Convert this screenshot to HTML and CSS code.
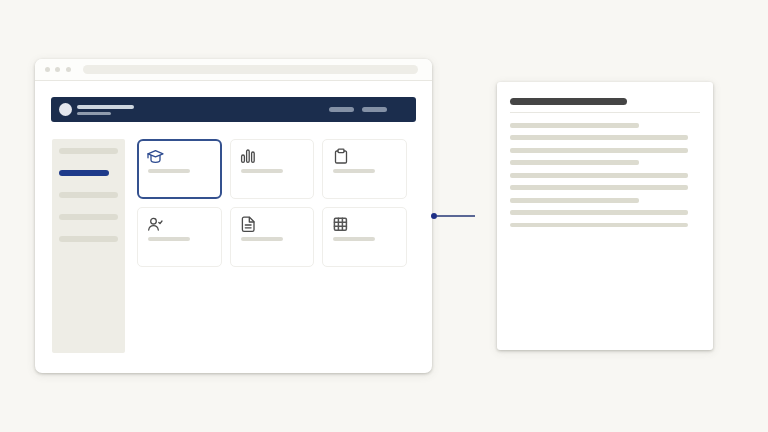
FILE: index.html
```html
<!DOCTYPE html>
<html lang="en">
<head>
<meta charset="utf-8">
<title>Portal and document</title>
<link rel="stylesheet" href="styles.css">
</head>
<body>
<main class="stage">
  <section class="window">
    <header class="titlebar">
      <span class="dot"></span><span class="dot"></span><span class="dot"></span>
      <span class="url"></span>
    </header>
    <div class="content">
      <div class="nav">
        <span class="avatar"></span>
        <div class="brand"><span class="brand-a"></span><span class="brand-b"></span></div>
        <div class="nav-links"><span class="pill"></span><span class="pill"></span></div>
      </div>
      <div class="body-row">
        <aside class="sidebar">
          <span class="side-item"></span>
          <span class="side-item active"></span>
          <span class="side-item"></span>
          <span class="side-item"></span>
          <span class="side-item"></span>
        </aside>
        <div class="cards">
          <div class="card selected">
            <svg class="icon" viewBox="0 0 16 16"><path d="M7.500 2.700 0 5.800l7.500 3 7.500-3z"/><path d="M3 7.500V12c0 1.300 2 2.300 4.500 2.300S12 13.300 12 12V7.500"/><path d="M0 5.800v4"/></svg>
            <span class="label"></span>
          </div>
          <div class="card">
            <svg class="icon" viewBox="0 0 16 16"><rect x=".6" y="7" width="2.800" height="7.400" rx="1.400"/><rect x="5.600" y="2" width="2.600" height="12.400" rx="1.300"/><rect x="10.600" y="4" width="2.600" height="10.400" rx="1.300"/></svg>
            <span class="label"></span>
          </div>
          <div class="card">
            <svg class="icon" viewBox="0 0 16 16"><path d="M5 3H3.800C3 3 2.500 3.500 2.500 4.300v9.400c0 .8.500 1.300 1.300 1.300h8.400c.8 0 1.300-.5 1.300-1.300V4.300c0-.8-.5-1.300-1.300-1.300H11"/><rect x="5" y="1.200" width="6" height="3.400" rx=".8"/></svg>
            <span class="label"></span>
          </div>
          <div class="card">
            <svg class="icon" viewBox="0 0 16 16"><circle cx="5.500" cy="5.200" r="2.800"/><path d="M.7 14c.4-2.800 2.400-4.300 4.800-4.300s4.400 1.500 4.800 4.300"/><path d="m10.800 6.500 1.200 1.100 2-2.600"/></svg>
            <span class="label"></span>
          </div>
          <div class="card">
            <svg class="icon" viewBox="0 0 16 16"><path d="M8.500 1.200H3c-1 0-1.600.6-1.600 1.600v11c0 1 .6 1.600 1.600 1.600h8.400c1 0 1.600-.6 1.600-1.600V5.800z"/><path d="M8.300 1.500v4.500h4.500"/><path d="M4.300 9h5.800M4.300 11.800h5.800"/></svg>
            <span class="label"></span>
          </div>
          <div class="card">
            <svg class="icon heavy" viewBox="0 0 16 16"><rect x="1.400" y="2.200" width="12" height="12" rx="1.200"/><path d="M5.400 2.200v12M9.400 2.200v12M1.400 6.200h12M1.400 10.200h12"/></svg>
            <span class="label"></span>
          </div>
        </div>
      </div>
    </div>
  </section>
  <div class="connector"><span class="node"></span><span class="wire"></span></div>
  <article class="doc">
    <span class="doc-title"></span>
    <div class="doc-lines">
      <span class="line short"></span>
      <span class="line"></span>
      <span class="line"></span>
      <span class="line short"></span>
      <span class="line"></span>
      <span class="line"></span>
      <span class="line short"></span>
      <span class="line"></span>
      <span class="line"></span>
    </div>
  </article>
</main>
</body>
</html>
```
FILE: styles.css
```css
* { box-sizing: border-box; }
html, body { margin: 0; height: 100%; }
body {
  background: #f8f7f3;
  font-family: "Liberation Sans", sans-serif;
  overflow: hidden;
}
.stage {
  display: flex;
  align-items: flex-start;
  width: 768px;
  height: 432px;
  padding: 59px 0 0 35px;
}
.window {
  width: 397px;
  height: 314px;
  flex: none;
  background: #fff;
  border-radius: 7px;
  box-shadow: 0 1px 3px rgba(70, 68, 55, .28), 0 2px 10px rgba(70, 68, 55, .1);
}
.titlebar {
  display: flex;
  align-items: center;
  height: 22px;
  padding: 0 14px 1px 9.500px;
  border-bottom: 1px solid #e8e7e1;
  background: #fdfdfb;
  border-radius: 7px 7px 0 0;
}
.dot {
  width: 5px;
  height: 5px;
  margin-right: 5.500px;
  border-radius: 50%;
  background: #dddcd5;
}
.url {
  flex: 1;
  height: 9px;
  margin-left: 7px;
  border-radius: 5px;
  background: #eeede7;
}
.content { padding: 16px 16px 0 16px; }
.nav {
  display: flex;
  align-items: center;
  height: 25px;
  width: 365px;
  padding: 0 29px 0 8px;
  border-radius: 3px;
  background: #1b2d4d;
}
.avatar {
  width: 13px;
  height: 13px;
  border-radius: 50%;
  background: #e4e7ee;
}
.brand {
  display: flex;
  flex-direction: column;
  gap: 2.500px;
  margin-left: 5px;
  padding-top: 1px;
}
.brand-a { width: 57px; height: 4px; border-radius: 2px; background: #ced6df; }
.brand-b { width: 34px; height: 3px; border-radius: 2px; background: #8f9bad; }
.nav-links { display: flex; gap: 8px; margin-left: auto; }
.pill { width: 25px; height: 4.500px; border-radius: 3px; background: #8491a6; }
.body-row { display: flex; margin-top: 17px; padding-left: 1px; }
.sidebar {
  display: flex;
  flex-direction: column;
  gap: 16px;
  width: 73px;
  height: 214px;
  padding: 9px 7px;
  background: #eeede6;
  border-radius: 2px;
}
.side-item { width: 59px; height: 6px; border-radius: 3px; background: #dddcd1; }
.side-item.active { width: 50px; background: #1e3a8a; }
.cards {
  display: grid;
  grid-template-columns: 85px 84px 85px;
  grid-auto-rows: 60px;
  gap: 8px;
  margin-left: 12px;
}
.card {
  display: flex;
  flex-direction: column;
  padding: 8px 10px;
  border: 1px solid #efeeea;
  border-radius: 5px;
  background: #fff;
}
.card.selected { border: 2px solid #34518f; border-radius: 6px; padding: 7px 9px; }
.icon {
  width: 16px;
  height: 16px;
  overflow: visible;
  fill: none;
  stroke: #4a4a4a;
  stroke-width: 1.300;
  stroke-linecap: round;
  stroke-linejoin: round;
}
.icon.heavy { stroke-width: 1.500; stroke: #555; }
.selected .icon { stroke: #2c4a90; }
.label {
  width: 42px;
  height: 4px;
  margin-top: 5px;
  border-radius: 2px;
  background: #dcdbd2;
}
.connector {
  display: flex;
  align-items: center;
  flex: none;
  width: 44px;
  margin-top: 154px;
  margin-left: -1px;
}
.node { width: 6px; height: 6px; flex: none; border-radius: 50%; background: #1e2f86; }
.wire { flex: 1; height: 1.500px; background: #5a6795; }
.doc {
  display: flex;
  flex-direction: column;
  width: 216px;
  height: 268px;
  flex: none;
  margin-top: 23px;
  margin-left: 22px;
  padding: 16px 13px 0;
  background: #fff;
  border-radius: 3px;
  box-shadow: 0 1px 3px rgba(70, 68, 55, .3), 0 2px 10px rgba(70, 68, 55, .1);
}
.doc-title { width: 117px; height: 7px; border-radius: 4px; background: #454545; }
.doc-lines {
  display: flex;
  flex-direction: column;
  gap: 7.900px;
  margin-top: 7px;
  padding-top: 10px;
  border-top: 1px solid #e8e7e1;
}
.line { width: 178px; height: 4.600px; border-radius: 2px; background: #dcdbcf; }
.line.short { width: 129px; }
```
